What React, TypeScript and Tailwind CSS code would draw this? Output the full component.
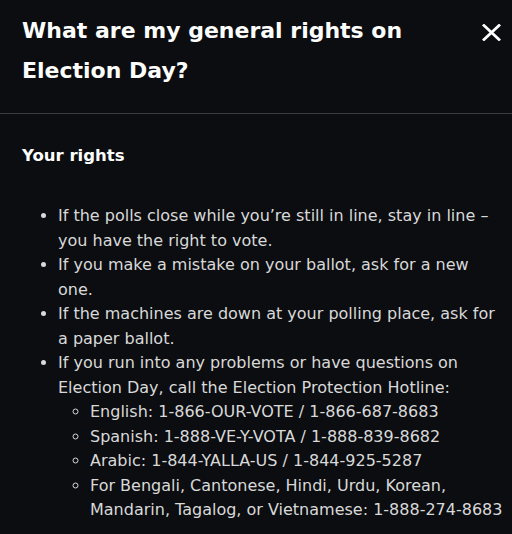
const hotlines = [
  'English: 1-866-OUR-VOTE / 1-866-687-8683',
  'Spanish: 1-888-VE-Y-VOTA / 1-888-839-8682',
  'Arabic: 1-844-YALLA-US / 1-844-925-5287',
  'For Bengali, Cantonese, Hindi, Urdu, Korean, Mandarin, Tagalog, or Vietnamese: 1-888-274-8683',
];

export default function App() {
  return (
    <div
      className="w-[512px] h-[534px] overflow-hidden bg-[#0b0d10] text-[#d9d9d9]"
      style={{ fontFamily: '"DejaVu Sans", "Liberation Sans", sans-serif' }}
    >
      <div className="flex items-start justify-between pl-[22px] pr-[11px] pt-[11px] pb-[22px] border-b border-[#3a3b3d]">
        <h2 className="w-[400px] text-[22px] leading-[40px] font-bold text-white">
          What are my general rights on Election Day?
        </h2>
        <button className="mt-[13px] text-white">
          <svg width="19" height="17" viewBox="0 0 19 17" fill="none" stroke="currentColor" strokeWidth="2.8" strokeLinecap="square">
            <path d="M2 1.5L17 15.5M17 1.5L2 15.5" />
          </svg>
        </button>
      </div>

      <div className="pl-[22px] pr-[8px] pt-[30px]">
        <h3 className="text-[16.5px] leading-[24px] font-bold text-white">Your rights</h3>

        <ul className="mt-[36px] pl-[36px] list-disc text-[16px] leading-[24.5px] marker:text-[#d9d9d9]">
          <li>
            If the polls close while you’re still in line, stay in line – you have the right to vote.
          </li>
          <li>If you make a mistake on your ballot, ask for a new one.</li>
          <li>If the machines are down at your polling place, ask for a paper ballot.</li>
          <li>
            If you run into any problems or have questions on Election Day, call the Election
            Protection Hotline:
            <ul className="pl-[32px] list-[circle]">
              {hotlines.map((h) => (
                <li key={h}>{h}</li>
              ))}
            </ul>
          </li>
        </ul>
      </div>
    </div>
  );
}
